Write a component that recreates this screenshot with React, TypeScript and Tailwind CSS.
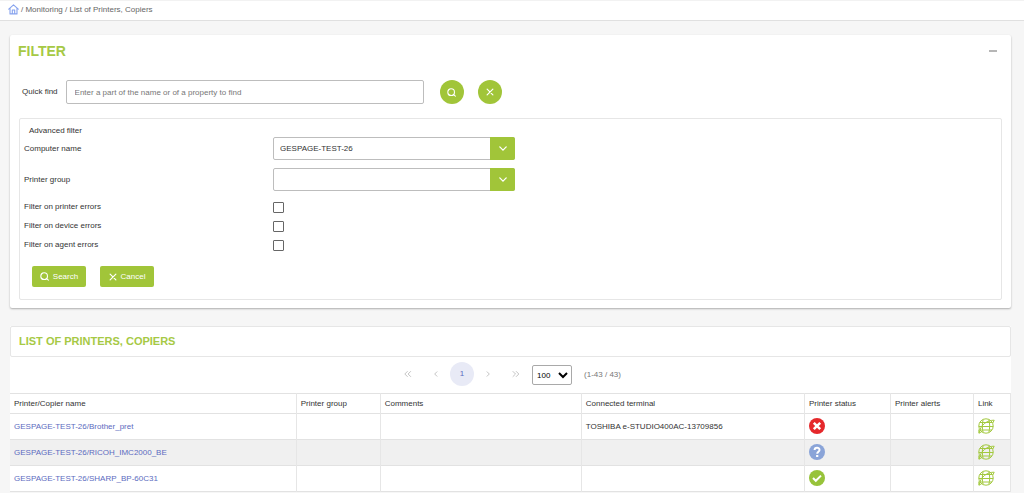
import type { ReactNode } from "react";

type Status = "error" | "unknown" | "ok";

type Printer = {
  name: string;
  group?: string;
  comments?: string;
  terminal?: string;
  status: Status;
  alerts?: string;
};

const PRINTERS: Printer[] = [
  { name: "GESPAGE-TEST-26/Brother_pret", terminal: "TOSHIBA e-STUDIO400AC-13709856", status: "error" },
  { name: "GESPAGE-TEST-26/RICOH_IMC2000_BE", status: "unknown" },
  { name: "GESPAGE-TEST-26/SHARP_BP-60C31", status: "ok" },
];

const COLUMNS = [
  { label: "Printer/Copier name", width: "w-[28.6%]" },
  { label: "Printer group", width: "w-[8.4%]" },
  { label: "Comments", width: "w-[20.1%]" },
  { label: "Connected terminal", width: "w-[22.3%]" },
  { label: "Printer status", width: "w-[8.6%]" },
  { label: "Printer alerts", width: "w-[8.3%]" },
  { label: "Link", width: "w-[3.7%]" },
];

const ERROR_FILTERS = [
  { id: "printer-errors", label: "Filter on printer errors" },
  { id: "device-errors", label: "Filter on device errors" },
  { id: "agent-errors", label: "Filter on agent errors" },
];

function HomeIcon() {
  return (
    <svg viewBox="0 0 12 12" className="size-[11px]" fill="none" stroke="#86a2ee" strokeWidth="1.2" strokeLinejoin="round">
      <path d="M.8 5.6 6 1l5.2 4.6M2.2 4.6v6.2h7.6V4.6" strokeLinecap="round" />
      <path d="M4.7 10.8V6.6h2.6v4.2" />
    </svg>
  );
}

function SearchIcon({ className }: { className: string }) {
  return (
    <svg viewBox="0 0 10 10" className={className} fill="none" stroke="currentColor" strokeWidth="1.2" strokeLinecap="round">
      <circle cx="4.6" cy="4.6" r="3.7" />
      <path d="m7 7 2.3 2" />
    </svg>
  );
}

function CrossIcon({ className }: { className: string }) {
  return (
    <svg viewBox="0 0 10 10" className={className} fill="none" stroke="currentColor" strokeWidth="1.5" strokeLinecap="round">
      <path d="m1.4 1.4 7.2 7.2m0-7.2L1.4 8.6" />
    </svg>
  );
}

/** Double or single arrow of the pager. */
function PagerIcon({ path }: { path: string }) {
  return (
    <svg viewBox="0 0 8 8" className="size-2" fill="none" stroke="#c4c4c4" strokeWidth="1">
      <path d={path} />
    </svg>
  );
}

function StatusIcon({ status }: { status: Status }) {
  return (
    <svg viewBox="0 0 16 16" className="mb-0.5 size-4" role="img" aria-label={status} fill="none" stroke="#fff" strokeWidth="2">
      {status === "error" && (
        <>
          <circle cx="8" cy="8" r="8" fill="#e5282b" stroke="none" />
          <path d="m4.8 4.8 6.4 6.4m0-6.4-6.4 6.4" strokeWidth="2.5" />
        </>
      )}
      {status === "unknown" && (
        <>
          <circle cx="8" cy="8" r="8" fill="#8aa4d8" stroke="none" />
          <path d="M5.6 6.1c0-3.100 4.900-3 4.900-.2 0 1.900-2.300 1.900-2.300 3.900" />
          <path d="M7.100 11h2.200v2H7.100z" fill="#fff" stroke="none" />
        </>
      )}
      {status === "ok" && (
        <>
          <circle cx="8" cy="8" r="8" fill="#97c33a" stroke="none" />
          <path d="m4 8 2.800 2.800L12 5.600" />
        </>
      )}
    </svg>
  );
}

function GlobeIcon() {
  return (
    <svg viewBox="0 0 17 16" className="mb-0.5 h-4 w-[17px]" fill="none" stroke="#a3c93f" strokeWidth="1">
      <circle cx="8" cy="8" r="7.200" />
      <path d="M5.200 1.500C4 5.500 4 10.500 5.200 14.500M10.800 1.500c1.200 4 1.200 9 0 13M1.800 4.500h12.400M.800 8.500h14.400M2 12h12" />
      <path d="M16.200 2.200C9.500 2 2.500 6.500 1 15.200" />
      <path d="M16.200 2.200 14.800 5M1 15.200l2.800-1.600M1 15.200.800 11.500" />
    </svg>
  );
}

function FilterSelect({ id, label, value }: { id: string; label: string; value: string }) {
  return (
    <div className="grid grid-cols-[249px_1fr] items-center">
      <label htmlFor={id}>{label}</label>
      <div className="relative w-[242px]">
        <select
          id={id}
          defaultValue={value}
          className="block h-[23px] w-full appearance-none rounded-xs border border-[#bdbdbd] bg-white pr-7 pl-1.5 text-[8px]"
        >
          <option value={value}>{value}</option>
        </select>
        <span className="pointer-events-none absolute inset-y-0 right-0 grid w-[25px] place-items-center rounded-r-xs bg-[#a1c539] text-white">
          <svg viewBox="0 0 10 6" className="h-[5px] w-2" fill="none" stroke="currentColor" strokeWidth="1.600" strokeLinecap="round">
            <path d="m1 1 4 4 4-4" />
          </svg>
        </span>
      </div>
    </div>
  );
}

function RoundButton({ label, children }: { label: string; children: ReactNode }) {
  return (
    <button type="button" aria-label={label} className="grid size-6 place-items-center rounded-full bg-[#a1c539] text-white">
      {children}
    </button>
  );
}

function FilterPanel() {
  return (
    <section className="mt-3.5 rounded-xs bg-white px-2 pb-2 shadow-[0_1px_2px_rgba(0,0,0,0.3)]">
      <div className="flex h-8 items-center justify-between pr-1">
        <h2 className="text-[14px] font-bold text-[#a6c945]">FILTER</h2>
        <button type="button" aria-label="Collapse filter" className="flex h-4 w-3 items-center justify-center">
          <svg viewBox="0 0 8 2" className="h-0.5 w-2">
            <path d="M0 1h8" stroke="#858585" strokeWidth="1.200" />
          </svg>
        </button>
      </div>

      <form className="mt-[13px] flex items-center pl-1">
        <label htmlFor="quick-find">Quick find</label>
        <input
          id="quick-find"
          type="text"
          placeholder="Enter a part of the name or of a property to find"
          className="ml-2 h-6 w-[358px] rounded-xs border border-[#bdbdbd] px-2 placeholder:text-[#777]"
        />
        <div className="ml-4 flex gap-3.5">
          <RoundButton label="Find">
            <SearchIcon className="size-[9px]" />
          </RoundButton>
          <RoundButton label="Clear">
            <CrossIcon className="size-2" />
          </RoundButton>
        </div>
      </form>

      <form className="mt-3.5 mr-[1px] ml-[1px] rounded-xs border border-[#e6e6e6] px-1 pt-1.5 pb-3">
        <p className="pl-[5px]">Advanced filter</p>
        <div className="flex flex-col gap-2">
          <FilterSelect id="computer-name" label="Computer name" value="GESPAGE-TEST-26" />
          <FilterSelect id="printer-group" label="Printer group" value="" />
        </div>
        <div className="mt-2.5 flex flex-col gap-2">
          {ERROR_FILTERS.map((f) => (
            <div key={f.id} className="grid h-[11px] grid-cols-[249px_1fr] items-center">
              <label htmlFor={f.id}>{f.label}</label>
              <input
                id={f.id}
                type="checkbox"
                className="size-[11px] appearance-none rounded-[1px] border border-[#666] bg-white checked:bg-[#a1c539]"
              />
            </div>
          ))}
        </div>
        <div className="mt-4 flex gap-3.5 pl-2">
          <button type="button" className="flex h-[21px] w-[54px] items-center justify-center gap-1 rounded-xs bg-[#a1c539] text-white">
            <SearchIcon className="size-[9px]" /> Search
          </button>
          <button type="button" className="flex h-[21px] w-[54px] items-center justify-center gap-1 rounded-xs bg-[#a1c539] text-white">
            <CrossIcon className="size-2" /> Cancel
          </button>
        </div>
      </form>
    </section>
  );
}

function Pager() {
  return (
    <nav aria-label="Pages" className="flex h-9 items-center justify-center pr-1.5">
      <div className="flex items-center pb-0.5">
        <button type="button" aria-label="First page" className="grid h-6 w-7 place-items-center">
          <PagerIcon path="M3.600 1.200.800 4l2.800 2.800M6.900 1.200 4.100 4l2.800 2.800" />
        </button>
        <button type="button" aria-label="Previous page" className="grid h-6 w-7 place-items-center">
          <PagerIcon path="M5.200 1.500 2.700 4l2.500 2.500" />
        </button>
        <button type="button" aria-current="page" className="size-6 rounded-full bg-[#e8eaf6] text-[#5c6bc0]">
          1
        </button>
        <button type="button" aria-label="Next page" className="grid h-6 w-7 place-items-center">
          <PagerIcon path="M2.800 1.500 5.300 4 2.800 6.500" />
        </button>
        <button type="button" aria-label="Last page" className="grid h-6 w-7 place-items-center">
          <PagerIcon path="M.700 1.200 3.500 4 .700 6.800M4 1.200 6.800 4 4 6.800" />
        </button>
      </div>
      <select
        aria-label="Rows per page"
        defaultValue="100"
        className="ml-0.5 h-5 w-10 rounded-xs border border-[#a9a9a9] bg-white text-[8px] text-black"
      >
        <option value="100">100</option>
      </select>
      <span className="ml-3 text-[#777]">(1-43 / 43)</span>
    </nav>
  );
}

function PrinterTable() {
  return (
    <table className="w-full table-fixed border-collapse text-left">
      <thead>
        <tr className="h-5 border-y border-[#e2e2e2]">
          {COLUMNS.map((c) => (
            <th key={c.label} scope="col" className={`${c.width} border-r border-[#e6e6e6] px-1 font-normal`}>
              {c.label}
            </th>
          ))}
        </tr>
      </thead>
      <tbody>
        {PRINTERS.map((p) => (
          <tr key={p.name} className="h-[26px] border-b border-[#e2e2e2] even:bg-[#f0f0f0] [&>td]:border-r [&>td]:border-[#e6e6e6] [&>td]:px-1">
            <td>
              <a href="#" className="text-[#5c6bc0]">
                {p.name}
              </a>
            </td>
            <td>{p.group}</td>
            <td>{p.comments}</td>
            <td>{p.terminal}</td>
            <td>
              <StatusIcon status={p.status} />
            </td>
            <td>{p.alerts}</td>
            <td>
              <a href="#" aria-label={`Open ${p.name}`} className="block">
                <GlobeIcon />
              </a>
            </td>
          </tr>
        ))}
      </tbody>
    </table>
  );
}

export default function App() {
  return (
    <div className="min-h-screen bg-[#f6f6f6] font-['Liberation_Sans',Arial,sans-serif] text-[8px] leading-[12px] text-[#333]">
      <header className="flex h-[21px] items-center border-t border-b border-t-[#f2f2f2] border-b-[#e0e0e0] bg-white pb-0.5 pl-2">
        <nav aria-label="Breadcrumb" className="flex items-center gap-0.5 text-[#666]">
          <a href="#" aria-label="Home">
            <HomeIcon />
          </a>
          <span>/ Monitoring / List of Printers, Copiers</span>
        </nav>
      </header>

      <main className="mr-[13px] ml-2.5">
        <FilterPanel />
        <section className="mt-[18px] bg-white">
          <h2 className="flex h-[31px] items-center rounded-xs border border-[#e6e6e6] pb-0.5 pl-2 text-[11px] font-bold text-[#a6c945]">
            LIST OF PRINTERS, COPIERS
          </h2>
          <Pager />
          <PrinterTable />
        </section>
      </main>
    </div>
  );
}
